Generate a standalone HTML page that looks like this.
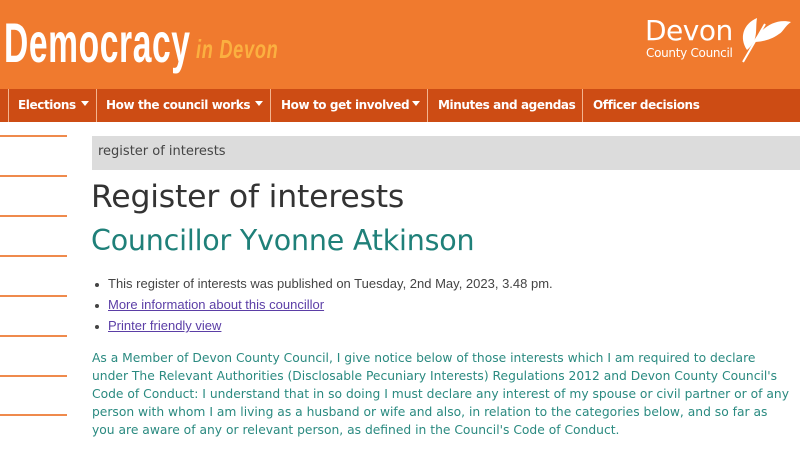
<!DOCTYPE html>
<html><head><meta charset="utf-8"><style>
*{margin:0;padding:0;box-sizing:border-box}
body{width:800px;height:450px;overflow:hidden;background:#fff;position:relative;font-family:"DejaVu Sans","Liberation Sans",sans-serif}
.a{position:absolute;white-space:nowrap}
#hdr{left:0;top:0;width:800px;height:89px;background:#f07a2e}
#nav{left:0;top:89px;width:800px;height:33px;background:#cd4c14}
.sep{position:absolute;top:89px;width:1px;height:33px;background:#f3b48f}
.ni{position:absolute;top:98px;color:#fff;font-weight:bold;font-size:12px;font-family:"DejaVu Sans",sans-serif;letter-spacing:-0.4px}
.ar{position:absolute;top:101px;width:0;height:0;border-left:4px solid transparent;border-right:4px solid transparent;border-top:5px solid #fff}
.ln{position:absolute;left:0;width:67px;height:2px;background:#ef8a4c}
p.t{position:absolute;left:92px;top:349px;color:#2a8a80;font-size:12.3px;line-height:18px;white-space:nowrap}
.li{position:absolute;left:108px;font-family:"Liberation Sans",Arial,sans-serif;font-size:13px;color:#444}
.b{position:absolute;left:95px;width:4px;height:4px;border-radius:2px;background:#444}
a{color:#5b3ea6;text-decoration:underline}
</style></head><body>
<div class="a" id="hdr"></div>
<div class="a" style="left:4px;top:10px;font-family:'Liberation Sans',sans-serif;font-weight:bold;font-size:56px;color:#fff;transform:scaleX(0.6);transform-origin:0 0;letter-spacing:1px">Democracy</div>
<div class="a" style="left:196px;top:34px;font-family:'Liberation Sans',sans-serif;font-weight:bold;font-style:italic;font-size:26px;color:#fbb040;transform:scaleX(0.7);transform-origin:0 0;letter-spacing:1px">in Devon</div>
<div class="a" style="left:645px;top:14px;font-family:'DejaVu Sans',sans-serif;font-size:28px;color:#fff;letter-spacing:-0.5px">Devon</div>
<div class="a" style="left:646px;top:46px;font-family:'DejaVu Sans',sans-serif;font-size:12px;color:#fff;letter-spacing:-0.3px">County Council</div>
<svg class="a" style="left:735px;top:10px" width="60" height="56" viewBox="0 0 60 56"><path d="M8 52 L30 14" stroke="#fff" stroke-width="2" fill="none"/><path d="M12 40 C4 28 8 14 22 8 C20 20 24 30 12 40Z" fill="#fff"/><path d="M18 32 C26 18 40 8 56 12 C50 16 48 22 44 24 C36 30 26 32 18 32Z" fill="#fff"/></svg>
<div class="a" id="nav"></div>
<div class="sep" style="left:8px"></div><div class="sep" style="left:96px"></div><div class="sep" style="left:270px"></div><div class="sep" style="left:427px"></div><div class="sep" style="left:582px"></div>
<div class="ni" style="left:18px">Elections</div><div class="ar" style="left:81px"></div>
<div class="ni" style="left:106px">How the council works</div><div class="ar" style="left:255px"></div>
<div class="ni" style="left:281px">How to get involved</div><div class="ar" style="left:412px"></div>
<div class="ni" style="left:438px">Minutes and agendas</div>
<div class="ni" style="left:593px">Officer decisions</div>
<div class="ln" style="top:135px"></div><div class="ln" style="top:175px"></div><div class="ln" style="top:215px"></div><div class="ln" style="top:255px"></div><div class="ln" style="top:295px"></div><div class="ln" style="top:335px"></div><div class="ln" style="top:375px"></div><div class="ln" style="top:414px"></div>
<div class="a" style="left:92px;top:136px;width:708px;height:34px;background:#dcdcdc"></div>
<div class="a" style="left:98px;top:144px;font-size:13px;color:#444">register of interests</div>
<div class="a" style="left:91px;top:179px;font-size:31.5px;color:#333;letter-spacing:-0.2px">Register of interests</div>
<div class="a" style="left:91px;top:224px;font-size:28.5px;color:#1f8079;letter-spacing:-0.2px">Councillor Yvonne Atkinson</div>
<div class="b" style="top:283px"></div><div class="li" style="top:276px">This register of interests was published on Tuesday, 2nd May, 2023, 3.48 pm.</div>
<div class="b" style="top:304px"></div><div class="li" style="top:297px"><a>More information about this councillor</a></div>
<div class="b" style="top:325px"></div><div class="li" style="top:318px"><a>Printer friendly view</a></div>
<p class="t">As a Member of Devon County Council, I give notice below of those interests which I am required to declare<br>under The Relevant Authorities (Disclosable Pecuniary Interests) Regulations 2012 and Devon County Council's<br>Code of Conduct: I understand that in so doing I must declare any interest of my spouse or civil partner or of any<br>person with whom I am living as a husband or wife and also, in relation to the categories below, and so far as<br>you are aware of any or relevant person, as defined in the Council's Code of Conduct.</p>
</body></html>
